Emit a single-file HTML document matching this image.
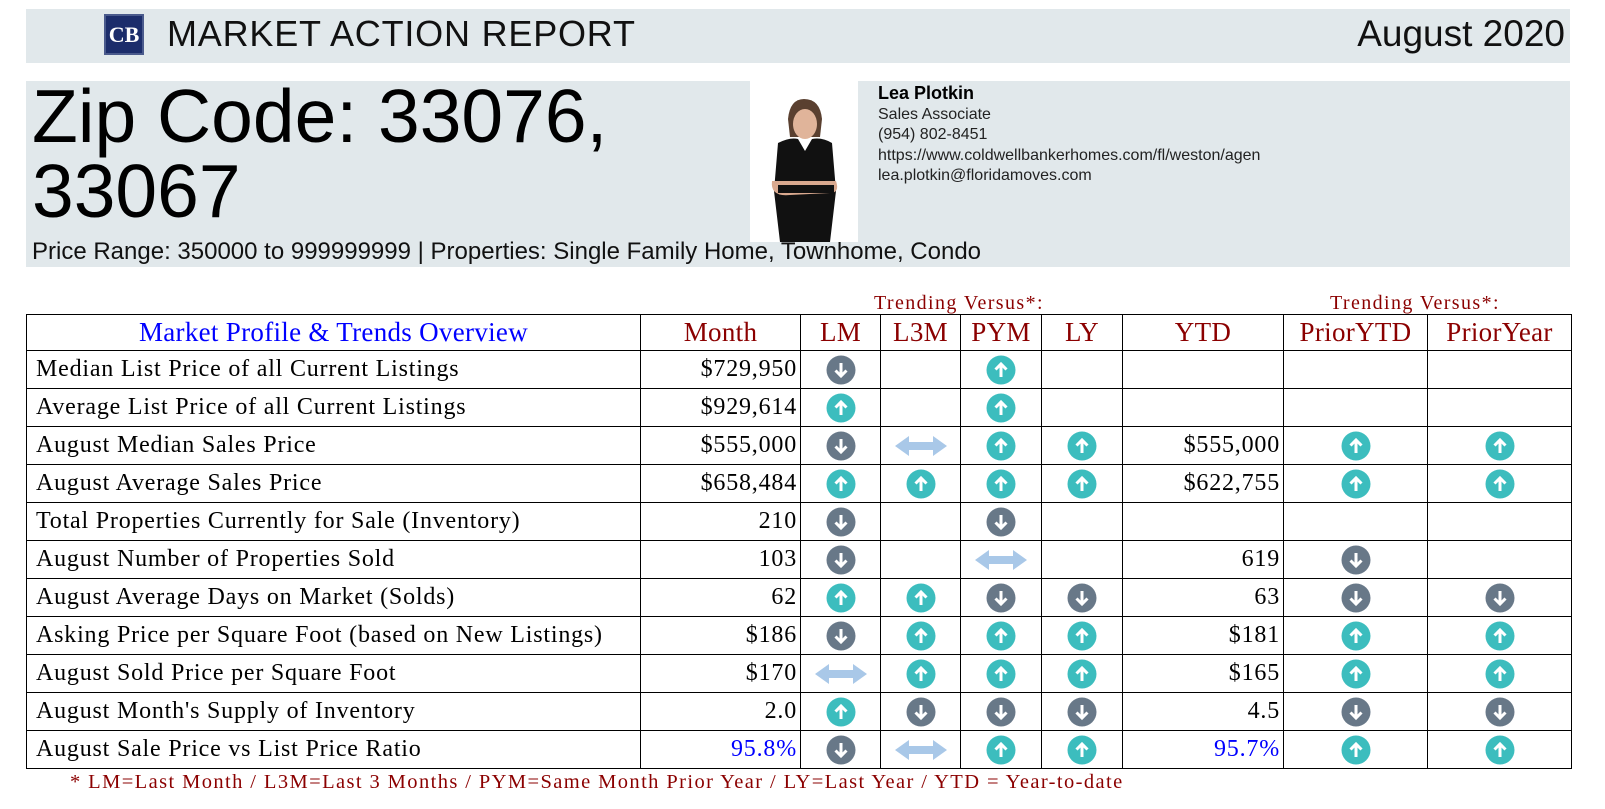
<!DOCTYPE html>
<html><head><meta charset="utf-8"><style>
body{margin:0;width:1605px;height:809px;background:#fff;position:relative;overflow:hidden;font-family:"Liberation Sans",Arial,sans-serif}
.abs{position:absolute}
.bar{background:#e1e8eb}
table{position:absolute;left:26px;top:314px;border-collapse:collapse;table-layout:fixed;width:1545px;font-family:"Liberation Serif",serif}
td{border:1.5px solid #000;padding:0;height:37px;font-size:24px;letter-spacing:0.8px;white-space:nowrap;overflow:hidden;vertical-align:middle}
tr.h td{height:35px;color:#8b0000;font-size:27px;letter-spacing:0.3px;text-align:center}
tr.h td.blue{color:#0000ff}
td.l{padding-left:9px;text-align:left}
td.v{text-align:right;padding-right:3px}
td.c{text-align:center}
.blue{color:#0000ff}
svg{display:block;margin:0 auto}
.red{color:#8b0000;font-family:"Liberation Serif",serif}
</style></head><body>
<div class="abs bar" style="left:26px;top:9px;width:1544px;height:54px"></div>
<div class="abs" style="left:104px;top:14px;width:40px;height:41px;background:#1c2d6b;box-sizing:border-box;border:2px solid #4a5a8c;color:#fff;font:bold 22px 'Liberation Serif',serif;text-align:center;line-height:37px">CB</div>
<div class="abs" style="left:167px;top:13px;font-size:36px;letter-spacing:0.8px;line-height:42px;color:#111">MARKET ACTION REPORT</div>
<div class="abs" style="right:40px;top:13px;font-size:37px;line-height:42px;color:#111">August 2020</div>

<div class="abs bar" style="left:26px;top:81px;width:1544px;height:186px"></div>
<div class="abs" style="left:32px;top:79px;font-size:75px;line-height:75px;color:#000">Zip Code: 33076,<br>33067</div>
<div class="abs" style="left:32px;top:238px;font-size:24px;line-height:27px;color:#111">Price Range: 350000 to 999999999 | Properties: Single Family Home, Townhome, Condo</div>
<div class="abs" style="left:750px;top:81px;width:108px;height:161px;background:#fff;overflow:hidden">
<svg width="108" height="161" viewBox="0 0 108 161">
<path d="M38 38 Q40 18 54 18 Q70 18 72 38 L70 56 L40 56 Z" fill="#5a4030"/>
<ellipse cx="55" cy="43" rx="12" ry="15" fill="#e0b49a"/>
<path d="M28 62 Q40 56 48 58 L55 70 L62 58 Q72 56 82 62 L86 110 L80 161 L30 161 L24 110 Z" fill="#111"/>
<path d="M22 100 Q20 116 40 114 L80 112 Q90 112 86 100 Z" fill="#d9a98f"/>
<path d="M28 104 L84 104 L84 112 L28 112 Z" fill="#111"/>
</svg></div>
<div class="abs" style="left:878px;top:83px;font-size:18px;font-weight:bold;color:#000">Lea Plotkin</div>
<div class="abs" style="left:878px;top:105px;font-size:16px;line-height:20.3px;color:#222">Sales Associate<br>(954) 802-8451<br>https://www.coldwellbankerhomes.com/fl/weston/agen<br>lea.plotkin@floridamoves.com</div>

<div class="abs red" style="left:874px;top:292px;font-size:20px;letter-spacing:1.4px">Trending Versus*:</div>
<div class="abs red" style="left:1330px;top:292px;font-size:20px;letter-spacing:1.4px">Trending Versus*:</div>

<svg width="0" height="0" style="position:absolute">
<defs>
<g id="u"><circle cx="15" cy="15" r="14.5" fill="#3cbdbe"/><path d="M15 22V9M9.5 14.5L15 9L20.5 14.5" stroke="#fff" stroke-width="3" fill="none"/></g>
<g id="d"><circle cx="15" cy="15" r="14.5" fill="#687888"/><path d="M15 8V21M9.5 15.5L15 21L20.5 15.5" stroke="#fff" stroke-width="3" fill="none"/></g>
<g id="s"><path d="M0 11L14 1V7H38V1L52 11L38 21V15H14V21Z" fill="#a9c8e8"/></g>
</defs></svg>

<table>
<colgroup><col style="width:614px"><col style="width:160px"><col style="width:80px"><col style="width:80px"><col style="width:81px"><col style="width:81px"><col style="width:161px"><col style="width:144px"><col style="width:144px"></colgroup>
<tr class="h"><td class="blue">Market Profile &amp; Trends Overview</td><td>Month</td><td>LM</td><td>L3M</td><td>PYM</td><td>LY</td><td>YTD</td><td>PriorYTD</td><td>PriorYear</td></tr>
<tr><td class="l">Median List Price of all Current Listings</td><td class="v">$729,950</td><td class="c"><svg width="30" height="30"><use href="#d"/></svg></td><td></td><td class="c"><svg width="30" height="30"><use href="#u"/></svg></td><td></td><td></td><td></td><td></td></tr>
<tr><td class="l">Average List Price of all Current Listings</td><td class="v">$929,614</td><td class="c"><svg width="30" height="30"><use href="#u"/></svg></td><td></td><td class="c"><svg width="30" height="30"><use href="#u"/></svg></td><td></td><td></td><td></td><td></td></tr>
<tr><td class="l">August Median Sales Price</td><td class="v">$555,000</td><td class="c"><svg width="30" height="30"><use href="#d"/></svg></td><td class="c"><svg width="52" height="22"><use href="#s"/></svg></td><td class="c"><svg width="30" height="30"><use href="#u"/></svg></td><td class="c"><svg width="30" height="30"><use href="#u"/></svg></td><td class="v">$555,000</td><td class="c"><svg width="30" height="30"><use href="#u"/></svg></td><td class="c"><svg width="30" height="30"><use href="#u"/></svg></td></tr>
<tr><td class="l">August Average Sales Price</td><td class="v">$658,484</td><td class="c"><svg width="30" height="30"><use href="#u"/></svg></td><td class="c"><svg width="30" height="30"><use href="#u"/></svg></td><td class="c"><svg width="30" height="30"><use href="#u"/></svg></td><td class="c"><svg width="30" height="30"><use href="#u"/></svg></td><td class="v">$622,755</td><td class="c"><svg width="30" height="30"><use href="#u"/></svg></td><td class="c"><svg width="30" height="30"><use href="#u"/></svg></td></tr>
<tr><td class="l">Total Properties Currently for Sale (Inventory)</td><td class="v">210</td><td class="c"><svg width="30" height="30"><use href="#d"/></svg></td><td></td><td class="c"><svg width="30" height="30"><use href="#d"/></svg></td><td></td><td></td><td></td><td></td></tr>
<tr><td class="l">August Number of Properties Sold</td><td class="v">103</td><td class="c"><svg width="30" height="30"><use href="#d"/></svg></td><td></td><td class="c"><svg width="52" height="22"><use href="#s"/></svg></td><td></td><td class="v">619</td><td class="c"><svg width="30" height="30"><use href="#d"/></svg></td><td></td></tr>
<tr><td class="l">August Average Days on Market (Solds)</td><td class="v">62</td><td class="c"><svg width="30" height="30"><use href="#u"/></svg></td><td class="c"><svg width="30" height="30"><use href="#u"/></svg></td><td class="c"><svg width="30" height="30"><use href="#d"/></svg></td><td class="c"><svg width="30" height="30"><use href="#d"/></svg></td><td class="v">63</td><td class="c"><svg width="30" height="30"><use href="#d"/></svg></td><td class="c"><svg width="30" height="30"><use href="#d"/></svg></td></tr>
<tr><td class="l">Asking Price per Square Foot (based on New Listings)</td><td class="v">$186</td><td class="c"><svg width="30" height="30"><use href="#d"/></svg></td><td class="c"><svg width="30" height="30"><use href="#u"/></svg></td><td class="c"><svg width="30" height="30"><use href="#u"/></svg></td><td class="c"><svg width="30" height="30"><use href="#u"/></svg></td><td class="v">$181</td><td class="c"><svg width="30" height="30"><use href="#u"/></svg></td><td class="c"><svg width="30" height="30"><use href="#u"/></svg></td></tr>
<tr><td class="l">August Sold Price per Square Foot</td><td class="v">$170</td><td class="c"><svg width="52" height="22"><use href="#s"/></svg></td><td class="c"><svg width="30" height="30"><use href="#u"/></svg></td><td class="c"><svg width="30" height="30"><use href="#u"/></svg></td><td class="c"><svg width="30" height="30"><use href="#u"/></svg></td><td class="v">$165</td><td class="c"><svg width="30" height="30"><use href="#u"/></svg></td><td class="c"><svg width="30" height="30"><use href="#u"/></svg></td></tr>
<tr><td class="l">August Month's Supply of Inventory</td><td class="v">2.0</td><td class="c"><svg width="30" height="30"><use href="#u"/></svg></td><td class="c"><svg width="30" height="30"><use href="#d"/></svg></td><td class="c"><svg width="30" height="30"><use href="#d"/></svg></td><td class="c"><svg width="30" height="30"><use href="#d"/></svg></td><td class="v">4.5</td><td class="c"><svg width="30" height="30"><use href="#d"/></svg></td><td class="c"><svg width="30" height="30"><use href="#d"/></svg></td></tr>
<tr><td class="l">August Sale Price vs List Price Ratio</td><td class="v blue">95.8%</td><td class="c"><svg width="30" height="30"><use href="#d"/></svg></td><td class="c"><svg width="52" height="22"><use href="#s"/></svg></td><td class="c"><svg width="30" height="30"><use href="#u"/></svg></td><td class="c"><svg width="30" height="30"><use href="#u"/></svg></td><td class="v blue">95.7%</td><td class="c"><svg width="30" height="30"><use href="#u"/></svg></td><td class="c"><svg width="30" height="30"><use href="#u"/></svg></td></tr>
</table>
<div class="abs red" style="left:70px;top:771px;font-size:20.5px;letter-spacing:1.4px">* LM=Last Month / L3M=Last 3 Months / PYM=Same Month Prior Year / LY=Last Year / YTD = Year-to-date</div>
</body></html>
